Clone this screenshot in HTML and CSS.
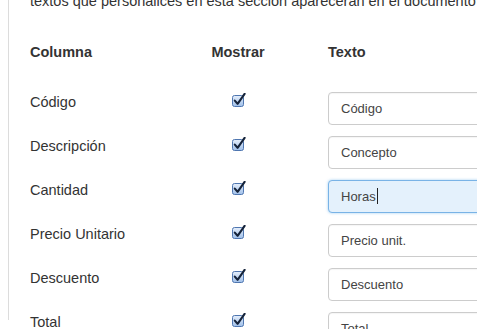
FILE: index.html
```html
<!DOCTYPE html>
<html lang="es">
<head>
<meta charset="utf-8">
<title>Columnas</title>
<link rel="stylesheet" href="styles.css">
</head>
<body>
<div class="panel">
  <p class="intro">textos que personalices en esta sección aparecerán en el documento final.</p>
  <div class="table">
    <div class="row head">
      <div class="col-label">Columna</div>
      <div class="col-show">Mostrar</div>
      <div class="col-text">Texto</div>
    </div>
    <div class="row">
      <div class="col-label">Código</div>
      <div class="col-show"><span class="check"><svg viewBox="0 0 16 15" width="16" height="15"><defs><linearGradient id="g1" x1="0" y1="0" x2="0" y2="1"><stop offset="0" stop-color="#e6effb"/><stop offset="1" stop-color="#9fbfe9"/></linearGradient></defs><rect x="0.5" y="2.5" width="11" height="11" rx="2" fill="url(#g1)" stroke="#4f76b0"/><path d="M2.8 7.6 L5.6 10.8 L12.6 0.8" fill="none" stroke="#15233a" stroke-width="2.1" stroke-linecap="round" stroke-linejoin="round"/></svg></span></div>
      <div class="col-text"><div class="field">Código</div></div>
    </div>
    <div class="row">
      <div class="col-label">Descripción</div>
      <div class="col-show"><span class="check"><svg viewBox="0 0 16 15" width="16" height="15"><rect x="0.5" y="2.5" width="11" height="11" rx="2" fill="url(#g1)" stroke="#4f76b0"/><path d="M2.8 7.6 L5.6 10.8 L12.6 0.8" fill="none" stroke="#15233a" stroke-width="2.1" stroke-linecap="round" stroke-linejoin="round"/></svg></span></div>
      <div class="col-text"><div class="field">Concepto</div></div>
    </div>
    <div class="row">
      <div class="col-label">Cantidad</div>
      <div class="col-show"><span class="check"><svg viewBox="0 0 16 15" width="16" height="15"><rect x="0.5" y="2.5" width="11" height="11" rx="2" fill="url(#g1)" stroke="#4f76b0"/><path d="M2.8 7.6 L5.6 10.8 L12.6 0.8" fill="none" stroke="#15233a" stroke-width="2.1" stroke-linecap="round" stroke-linejoin="round"/></svg></span></div>
      <div class="col-text"><div class="field focus">Horas<span class="caret"></span></div></div>
    </div>
    <div class="row">
      <div class="col-label">Precio Unitario</div>
      <div class="col-show"><span class="check"><svg viewBox="0 0 16 15" width="16" height="15"><rect x="0.5" y="2.5" width="11" height="11" rx="2" fill="url(#g1)" stroke="#4f76b0"/><path d="M2.8 7.6 L5.6 10.8 L12.6 0.8" fill="none" stroke="#15233a" stroke-width="2.1" stroke-linecap="round" stroke-linejoin="round"/></svg></span></div>
      <div class="col-text"><div class="field">Precio unit.</div></div>
    </div>
    <div class="row">
      <div class="col-label">Descuento</div>
      <div class="col-show"><span class="check"><svg viewBox="0 0 16 15" width="16" height="15"><rect x="0.5" y="2.5" width="11" height="11" rx="2" fill="url(#g1)" stroke="#4f76b0"/><path d="M2.8 7.6 L5.6 10.8 L12.6 0.8" fill="none" stroke="#15233a" stroke-width="2.1" stroke-linecap="round" stroke-linejoin="round"/></svg></span></div>
      <div class="col-text"><div class="field">Descuento</div></div>
    </div>
    <div class="row">
      <div class="col-label">Total</div>
      <div class="col-show"><span class="check"><svg viewBox="0 0 16 15" width="16" height="15"><rect x="0.5" y="2.5" width="11" height="11" rx="2" fill="url(#g1)" stroke="#4f76b0"/><path d="M2.8 7.6 L5.6 10.8 L12.6 0.8" fill="none" stroke="#15233a" stroke-width="2.1" stroke-linecap="round" stroke-linejoin="round"/></svg></span></div>
      <div class="col-text"><div class="field">Total</div></div>
    </div>
  </div>
</div>
</body>
</html>
```

FILE: styles.css
```css
html, body {
  margin: 0;
  padding: 0;
  background: #fff;
  overflow: hidden;
}
body {
  font-family: "Liberation Sans", Arial, Helvetica, sans-serif;
  color: #333;
  font-size: 14.5px;
  line-height: 20px;
  height: 329px;
}
.panel {
  margin-left: 8px;
  border-left: 1px solid #dcdcdc;
  padding-left: 21px;
  height: 100%;
}
.intro {
  margin: -9px 0 0 0;
  white-space: nowrap;
  font-size: 14.5px;
  line-height: 20px;
}
.table {
  margin-top: 31px;
}
.row {
  display: grid;
  grid-template-columns: 118px 120px 1fr;
  column-gap: 30px;
  align-items: start;
  height: 33px;
  margin-bottom: 11px;
}
.row.head {
  height: 20px;
  margin-bottom: 30px;
  font-weight: bold;
}
.col-show {
  text-align: center;
}
.row.head .col-show {
  text-align: center;
}
.check {
  display: inline-block;
  width: 16px;
  height: 15px;
  margin-top: 1px;
  margin-left: 4px;
}
.check svg {
  display: block;
}
.field {
  box-sizing: border-box;
  width: 220px;
  height: 33px;
  border: 1px solid #cccccc;
  border-radius: 4px;
  padding: 0 12px;
  font-size: 13px;
  line-height: 31px;
  color: #444;
  background: #fff;
  box-shadow: inset 0 1px 1px rgba(0,0,0,0.04);
  white-space: nowrap;
}
.field.focus {
  background: #e4f1fc;
  border-color: #79b3e6;
  box-shadow: 0 0 3px rgba(102,175,233,0.6);
}
.caret {
  display: inline-block;
  width: 1px;
  height: 16px;
  background: #222;
  vertical-align: -3px;
  margin-left: 1px;
}
```
